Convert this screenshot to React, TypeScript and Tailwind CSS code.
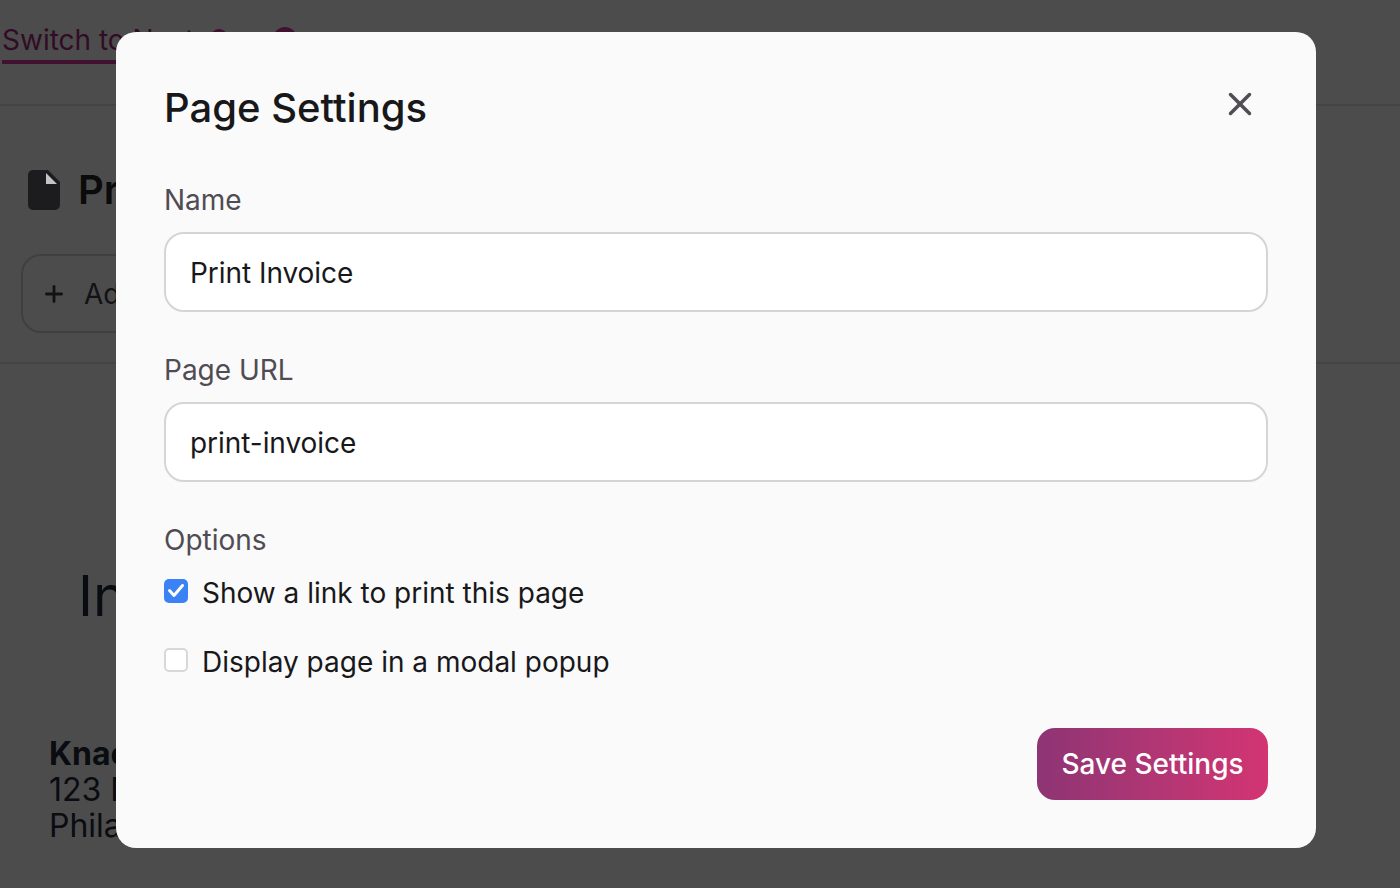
import * as React from 'react';
import {X, Plus} from 'lucide-react';

function Field({label, value}: {label: string; value: string}) {
  return (
    <div className="flex flex-col">
      <label className="h-[34px] text-[28px] leading-[34px] text-[#504c53]">{label}</label>
      <div className="mt-[15px] flex h-[80px] items-center rounded-[20px] border-2 border-[#d6d5d6] bg-white pl-[24px] pt-[2px] text-[28px] tracking-[-0.05px] text-[#18181b]">
        {value}
      </div>
    </div>
  );
}

function Option({label, checked}: {label: string; checked?: boolean}) {
  return (
    <div className="flex h-[34px] items-center gap-[14px] text-[28px] text-[#18181b]">
      {checked ? (
        <span className="mb-[4px] block h-[24px] w-[24px] rounded-[5px] bg-[#3b82f6]">
          <svg width="24" height="24" viewBox="0 0 24 24" fill="none">
            <path d="M5.5 11.5l4.5 5L18.5 6.5" stroke="white" strokeWidth="3" strokeLinecap="round" strokeLinejoin="round" />
          </svg>
        </span>
      ) : (
        <span className="mb-[4px] h-[24px] w-[24px] rounded-[5px] border-2 border-[#d9d8d9] bg-white" />
      )}
      <span>{label}</span>
    </div>
  );
}

export default function App() {
  return (
    <div className="relative h-[888px] w-[1400px] overflow-hidden bg-white font-['Inter',sans-serif]">
      {/* page behind the dialog */}
      <div className="flex flex-col">
        <div className="flex h-[106px] items-start border-b-2 border-[#e4e4e7] pl-[2px] pt-[22px]">
          <div className="border-b-[4px] border-[#db3a9e] pb-[2px] text-[28px] leading-[36px] text-[#a82a80]">Switch to Next</div>
          <span className="ml-[17px] mt-[7px] h-[16px] w-[16px] rounded-full bg-[#db3a9e]" />
          <span className="ml-[46px] mt-[5px] h-[24px] w-[24px] rounded-full bg-[#db3a9e]" />
        </div>
        <div className="flex h-[258px] flex-col border-b-2 border-[#e4e4e7]">
          <div className="mt-[64px] flex items-center gap-[18px] pl-[28px]">
            <svg width="32" height="40" viewBox="0 0 32 40" className="relative z-10">
              <path d="M5 0h15l12 12v23a5 5 0 0 1-5 5H5a5 5 0 0 1-5-5V5a5 5 0 0 1 5-5z" fill="#1c1b1e" />
              <path d="M18 3l11 11H18z" fill="#c4c3c5" />
            </svg>
            <span className="text-[40px] font-semibold leading-[40px] text-[#27272a]">Print Invoice</span>
          </div>
          <div className="ml-[21px] mt-[44px] flex h-[79px] w-[240px] items-center gap-[17px] rounded-[20px] border-2 border-[#d4d4d8] pl-[18px] text-[28px] text-[#3f3f46]">
            <Plus size={26} strokeWidth={2.6} />
            <span>Add</span>
          </div>
        </div>
        <div className="pl-[78px] pt-[199px] text-[56px] leading-[66px] text-[#1f2937]">Invoice</div>
        <div className="pl-[49px] pt-[107px] text-[32px] leading-[36px] text-[#1f2937]">
          <div className="font-bold">Knack</div>
          <div>123 Main Street</div>
          <div>Philadelphia</div>
        </div>
      </div>

      {/* overlay */}
      <div className="absolute inset-0 bg-black/70" />

      {/* dialog */}
      <div className="absolute left-[116px] top-[32px] z-20 flex h-[816px] w-[1200px] flex-col rounded-[20px] bg-[#fafafa] px-[48px]">
        <div className="flex h-[151px] items-start justify-between">
          <h2 className="mt-[49px] text-[40px] font-medium leading-[54px] text-[#18181b]">Page Settings</h2>
          <X size={38} strokeWidth={2.2} className="mr-[9px] mt-[53px] text-[#504c53]" />
        </div>
        <Field label="Name" value="Print Invoice" />
        <div className="mt-[41px]">
          <Field label="Page URL" value="print-invoice" />
        </div>
        <div className="mt-[41px] h-[34px] text-[28px] leading-[34px] text-[#504c53]">Options</div>
        <div className="mt-[19px] flex flex-col gap-[35px]">
          <Option label="Show a link to print this page" checked />
          <Option label="Display page in a modal popup" />
        </div>
        <div className="mt-[49px] flex justify-end">
          <button className="flex h-[72px] w-[231px] items-center justify-center rounded-[18px] bg-gradient-to-r from-[#8e3474] to-[#d33472] text-[28px] font-medium text-white">
            Save Settings
          </button>
        </div>
      </div>
    </div>
  );
}
